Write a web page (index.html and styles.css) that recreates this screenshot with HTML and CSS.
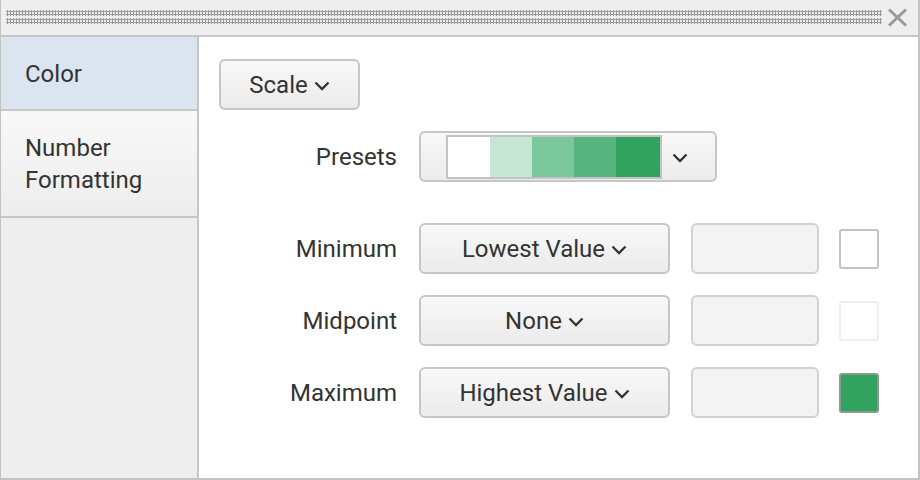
FILE: index.html
```html
<!DOCTYPE html>
<html>
<head>
<meta charset="utf-8">
<link rel="stylesheet" href="styles.css">
</head>
<body>
<div class="panel">
  <div class="titlebar">
    <div class="grip"><div class="band"></div><div class="band"></div></div>
    <svg class="close" width="21" height="19" viewBox="0 0 21 19"><path d="M2 1.5 L19 17.5 M19 1.5 L2 17.5" stroke="#999" stroke-width="3" fill="none"/></svg>
  </div>
  <div class="body">
    <div class="sidebar">
      <div class="tab active">Color</div>
      <div class="tab">Number<br>Formatting</div>
    </div>
    <div class="main">
      <button class="btn scale">Scale <svg class="chev" width="16" height="10" viewBox="0 0 16 10"><path d="M1.5 1.5 L8 8 L14.5 1.5" stroke="#333" stroke-width="2.3" fill="none"/></svg></button>
      <div class="row presets-row">
        <div class="label">Presets</div>
        <div class="btn presets">
          <div class="swatches">
            <span class="sw s1"></span><span class="sw s2"></span><span class="sw s3"></span><span class="sw s4"></span><span class="sw s5"></span>
          </div>
          <svg class="chev" width="16" height="10" viewBox="0 0 16 10"><path d="M1.5 1.5 L8 8 L14.5 1.5" stroke="#333" stroke-width="2.3" fill="none"/></svg>
        </div>
      </div>
      <div class="grid">
        <div class="row">
          <div class="label">Minimum</div>
          <button class="btn select">Lowest Value <svg class="chev" width="16" height="10" viewBox="0 0 16 10"><path d="M1.5 1.5 L8 8 L14.5 1.5" stroke="#333" stroke-width="2.3" fill="none"/></svg></button>
          <div class="input"></div>
          <div class="color c-white"></div>
        </div>
        <div class="row">
          <div class="label">Midpoint</div>
          <button class="btn select">None <svg class="chev" width="16" height="10" viewBox="0 0 16 10"><path d="M1.5 1.5 L8 8 L14.5 1.5" stroke="#333" stroke-width="2.3" fill="none"/></svg></button>
          <div class="input"></div>
          <div class="color c-faint"></div>
        </div>
        <div class="row">
          <div class="label">Maximum</div>
          <button class="btn select">Highest Value <svg class="chev" width="16" height="10" viewBox="0 0 16 10"><path d="M1.5 1.5 L8 8 L14.5 1.5" stroke="#333" stroke-width="2.3" fill="none"/></svg></button>
          <div class="input"></div>
          <div class="color c-green"></div>
        </div>
      </div>
    </div>
  </div>
</div>
</body>
</html>
```
FILE: styles.css
```css
* { box-sizing: border-box; }
html, body { margin: 0; padding: 0; background: #fff; }
body { font-family: Roboto, "Noto Sans", sans-serif; color: #333; font-size: 24px; }
.panel {
  width: 920px; height: 480px;
  border-left: 1px solid #c3c3c3;
  border-right: 2px solid #c3c3c3;
  border-bottom: 2px solid #c3c3c3;
  display: flex; flex-direction: column;
  background: #fff;
}
.titlebar {
  height: 37px; flex: none;
  background: #eeeeee;
  border-bottom: 2px solid #c6c6c6;
  display: flex; align-items: flex-start;
  padding: 0 0 0 5px;
}
.grip {
  width: 876px; margin-top: 10px;
  display: flex; flex-direction: column; gap: 2px;
}
.band {
  height: 6px;
  background-image: radial-gradient(circle, #999 1.1px, transparent 1.4px);
  background-size: 3px 3px;
}
.close { margin: 8px 0 0 5px; }
.body { flex: 1; display: flex; min-height: 0; }
.sidebar {
  width: 198px; flex: none;
  background: #eeeeee;
  border-right: 2px solid #c6c6c6;
}
.tab {
  padding: 0 0 0 24px;
  border-bottom: 2px solid #c6c6c6;
  background: linear-gradient(#f8f8f8, #ededed);
  line-height: 32px;
  padding-top: 21px; padding-bottom: 20px;
}
.tab.active {
  background: #dae5ef;
  height: 74px; padding-top: 21px;
}
.main { flex: 1; padding: 22px 0 0 20px; }
.btn {
  font: inherit; color: #333;
  border: 2px solid #c6c6c6;
  border-radius: 6px;
  background: linear-gradient(#f8f8f8, #ebebeb);
  height: 51px;
  display: flex; align-items: center; justify-content: center; gap: 6px;
  padding: 0;
}
.chev { margin-top: 2px; }
.scale { width: 141px; }
.row { display: flex; align-items: center; height: 51px; }
.label { width: 178px; text-align: right; margin-right: 22px; }
.presets-row { margin-top: 21px; }
.presets { width: 298px; justify-content: flex-start; padding-left: 25px; gap: 10px; }
.swatches {
  display: flex; height: 44px;
  border: 2px solid #c3c3c3;
}
.sw { width: 42px; height: 100%; }
.s1 { background: #ffffff; }
.s2 { background: #c5e6d4; }
.s3 { background: #7bc79c; }
.s4 { background: #55b57c; }
.s5 { background: #31a35f; width: 44px; }
.grid { margin-top: 41px; display: flex; flex-direction: column; gap: 21px; }
.select { width: 251px; margin-right: 21px; }
.input {
  width: 128px; height: 51px;
  border: 2px solid #d2d2d2; border-radius: 6px;
  background: #f3f3f3;
  margin-right: 20px;
}
.color { width: 40px; height: 40px; border-radius: 3px; border: 2px solid #c3c3c3; }
.c-white { background: #fff; }
.c-faint { background: #fff; border-color: #eeeeee; }
.c-green { background: #31a35f; border-color: #8a9a90; }
```
